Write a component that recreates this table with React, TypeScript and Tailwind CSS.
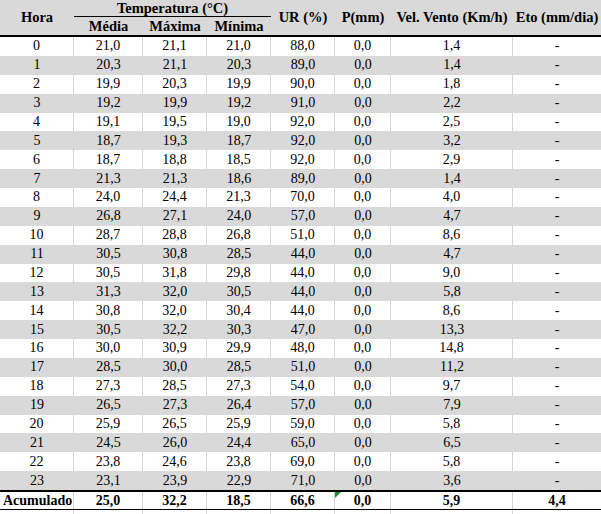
import React from "react";

const rows: string[][] = [
  ["0", "21,0", "21,1", "21,0", "88,0", "0,0", "1,4", "-"],
  ["1", "20,3", "21,1", "20,3", "89,0", "0,0", "1,4", "-"],
  ["2", "19,9", "20,3", "19,9", "90,0", "0,0", "1,8", "-"],
  ["3", "19,2", "19,9", "19,2", "91,0", "0,0", "2,2", "-"],
  ["4", "19,1", "19,5", "19,0", "92,0", "0,0", "2,5", "-"],
  ["5", "18,7", "19,3", "18,7", "92,0", "0,0", "3,2", "-"],
  ["6", "18,7", "18,8", "18,5", "92,0", "0,0", "2,9", "-"],
  ["7", "21,3", "21,3", "18,6", "89,0", "0,0", "1,4", "-"],
  ["8", "24,0", "24,4", "21,3", "70,0", "0,0", "4,0", "-"],
  ["9", "26,8", "27,1", "24,0", "57,0", "0,0", "4,7", "-"],
  ["10", "28,7", "28,8", "26,8", "51,0", "0,0", "8,6", "-"],
  ["11", "30,5", "30,8", "28,5", "44,0", "0,0", "4,7", "-"],
  ["12", "30,5", "31,8", "29,8", "44,0", "0,0", "9,0", "-"],
  ["13", "31,3", "32,0", "30,5", "44,0", "0,0", "5,8", "-"],
  ["14", "30,8", "32,0", "30,4", "44,0", "0,0", "8,6", "-"],
  ["15", "30,5", "32,2", "30,3", "47,0", "0,0", "13,3", "-"],
  ["16", "30,0", "30,9", "29,9", "48,0", "0,0", "14,8", "-"],
  ["17", "28,5", "30,0", "28,5", "51,0", "0,0", "11,2", "-"],
  ["18", "27,3", "28,5", "27,3", "54,0", "0,0", "9,7", "-"],
  ["19", "26,5", "27,3", "26,4", "57,0", "0,0", "7,9", "-"],
  ["20", "25,9", "26,5", "25,9", "59,0", "0,0", "5,8", "-"],
  ["21", "24,5", "26,0", "24,4", "65,0", "0,0", "6,5", "-"],
  ["22", "23,8", "24,6", "23,8", "69,0", "0,0", "5,8", "-"],
  ["23", "23,1", "23,9", "22,9", "71,0", "0,0", "3,6", "-"],
];

const total = ["Acumulado", "25,0", "32,2", "18,5", "66,6", "0,0", "5,9", "4,4"];

const cols = "grid grid-cols-[74px_69px_64px_64px_64px_56px_122px_88px]";

export default function App() {
  return (
    <div className="w-[601px] h-[514px] overflow-hidden bg-white text-black text-[14px] leading-none font-[family-name:Liberation_Serif,Times_New_Roman,serif]">
      {/* header */}
      <div className={`${cols} grid-rows-[17px_18px] bg-[#d9d9d9] border-b-2 border-black font-bold text-[14.5px]`}>
        <div className="row-span-2 flex items-center justify-center">Hora</div>
        <div className="col-span-3 flex items-center justify-center border-b border-black pt-[1px]">
          Temperatura (°C)
        </div>
        <div className="row-span-2 flex items-center justify-center">UR (%)</div>
        <div className="row-span-2 flex items-center justify-center">P(mm)</div>
        <div className="row-span-2 flex items-center justify-center">Vel. Vento (Km/h)</div>
        <div className="row-span-2 flex items-center justify-center">Eto (mm/dia)</div>
        <div className="flex items-center justify-center">Média</div>
        <div className="flex items-center justify-center">Máxima</div>
        <div className="flex items-center justify-center">Mínima</div>
      </div>

      {/* body */}
      {rows.map((r, i) => (
        <div
          key={r[0]}
          className={`${cols} h-[18.875px] ${i % 2 === 1 ? "bg-[#d9d9d9]" : "bg-white"}`}
        >
          {r.map((v, j) => (
            <div
              key={j}
              className={`flex items-center justify-center ${
                i % 2 === 0 && j < 7 ? "border-r border-[#d4d4d4]" : ""
              }`}
            >
              {v}
            </div>
          ))}
        </div>
      ))}

      {/* total */}
      <div className={`${cols} h-[20px] border-t-2 border-b border-black font-bold`}>
        {total.map((v, j) => (
          <div
            key={j}
            className={`relative flex items-center justify-center ${
              j === 0 ? "justify-start pl-[3px]" : ""
            } ${j < 7 ? "border-r border-[#d4d4d4]" : ""}`}
          >
            {j === 5 && (
              <svg className="absolute left-0 top-0" width="6" height="6" viewBox="0 0 6 6">
                <polygon points="0,0 6,0 0,6" fill="#1e8a2e" />
              </svg>
            )}
            {v}
          </div>
        ))}
      </div>
      <div className={`${cols} h-[4px]`}>
        {total.map((_, j) => (
          <div key={j} className={j < 7 ? "border-r border-[#d4d4d4]" : ""} />
        ))}
      </div>
    </div>
  );
}
